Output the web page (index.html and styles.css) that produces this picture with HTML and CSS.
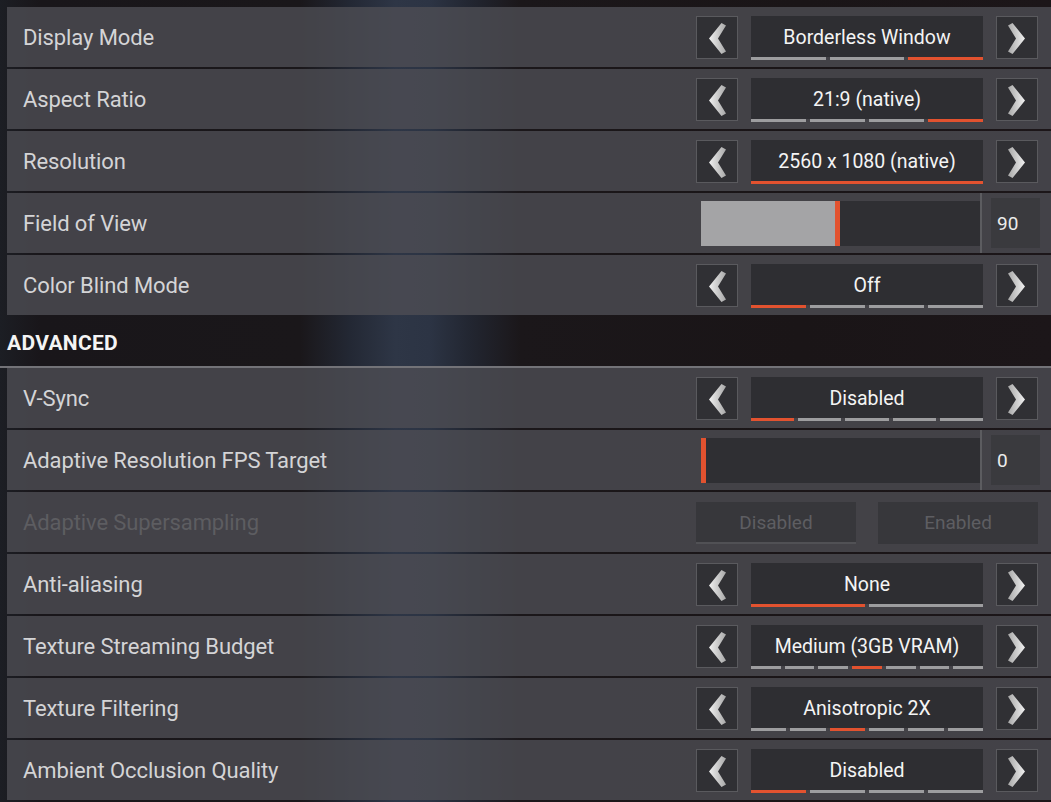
FILE: index.html
```html
<!DOCTYPE html>
<html lang="en">

<head>
  <meta charset="UTF-8">
  <meta name="viewport" content="width=device-width, initial-scale=1.0">
  <title>Video Settings</title>
  <link rel="stylesheet" href="styles.css">
</head>

<body>
  <svg width="0" height="0" class="defs">
    <defs>
      <linearGradient id="chev" x1="0" y1="0" x2="1" y2="0">
        <stop offset="0" stop-color="#f0f0f0" />
        <stop offset="1" stop-color="#a8a8a8" />
      </linearGradient>
      <symbol id="chevron" viewBox="0 0 40 41">
        <polygon points="24.5,6 29,8.5 21,21.5 29,34.5 24.5,37 12,21.5" fill="url(#chev)" />
      </symbol>
    </defs>
  </svg>

  <div class="settings">
    <div class="row">
      <span class="label">Display Mode</span>
      <div class="picker">
        <div class="arrow"><svg><use href="#chevron" /></svg></div>
        <div class="value">
          <span>Borderless Window</span>
          <div class="ticks"><i></i><i></i><i class="on"></i></div>
        </div>
        <div class="arrow next"><svg><use href="#chevron" /></svg></div>
      </div>
    </div>

    <div class="row">
      <span class="label">Aspect Ratio</span>
      <div class="picker">
        <div class="arrow"><svg><use href="#chevron" /></svg></div>
        <div class="value">
          <span>21:9 (native)</span>
          <div class="ticks"><i></i><i></i><i></i><i class="on"></i></div>
        </div>
        <div class="arrow next"><svg><use href="#chevron" /></svg></div>
      </div>
    </div>

    <div class="row">
      <span class="label">Resolution</span>
      <div class="picker">
        <div class="arrow"><svg><use href="#chevron" /></svg></div>
        <div class="value">
          <span>2560 x 1080 (native)</span>
          <div class="ticks"><i class="on"></i></div>
        </div>
        <div class="arrow next"><svg><use href="#chevron" /></svg></div>
      </div>
    </div>

    <div class="row">
      <span class="label">Field of View</span>
      <div class="slider">
        <div class="track">
          <div class="fill" style="width: 134px"></div>
          <div class="handle"></div>
        </div>
        <div class="divider"></div>
        <div class="num">90</div>
      </div>
    </div>

    <div class="row">
      <span class="label">Color Blind Mode</span>
      <div class="picker">
        <div class="arrow"><svg><use href="#chevron" /></svg></div>
        <div class="value">
          <span>Off</span>
          <div class="ticks"><i class="on"></i><i></i><i></i><i></i></div>
        </div>
        <div class="arrow next"><svg><use href="#chevron" /></svg></div>
      </div>
    </div>

    <h2 class="section">ADVANCED</h2>

    <div class="row">
      <span class="label">V-Sync</span>
      <div class="picker">
        <div class="arrow"><svg><use href="#chevron" /></svg></div>
        <div class="value">
          <span>Disabled</span>
          <div class="ticks"><i class="on"></i><i></i><i></i><i></i><i></i></div>
        </div>
        <div class="arrow next"><svg><use href="#chevron" /></svg></div>
      </div>
    </div>

    <div class="row">
      <span class="label">Adaptive Resolution FPS Target</span>
      <div class="slider">
        <div class="track">
          <div class="fill" style="width: 0px"></div>
          <div class="handle"></div>
        </div>
        <div class="divider"></div>
        <div class="num">0</div>
      </div>
    </div>

    <div class="row off">
      <span class="label">Adaptive Supersampling</span>
      <div class="toggle">
        <div class="opt sel">Disabled</div>
        <div class="opt">Enabled</div>
      </div>
    </div>

    <div class="row">
      <span class="label">Anti-aliasing</span>
      <div class="picker">
        <div class="arrow"><svg><use href="#chevron" /></svg></div>
        <div class="value">
          <span>None</span>
          <div class="ticks"><i class="on"></i><i></i></div>
        </div>
        <div class="arrow next"><svg><use href="#chevron" /></svg></div>
      </div>
    </div>

    <div class="row">
      <span class="label">Texture Streaming Budget</span>
      <div class="picker">
        <div class="arrow"><svg><use href="#chevron" /></svg></div>
        <div class="value">
          <span>Medium (3GB VRAM)</span>
          <div class="ticks"><i></i><i></i><i></i><i class="on"></i><i></i><i></i><i></i></div>
        </div>
        <div class="arrow next"><svg><use href="#chevron" /></svg></div>
      </div>
    </div>

    <div class="row">
      <span class="label">Texture Filtering</span>
      <div class="picker">
        <div class="arrow"><svg><use href="#chevron" /></svg></div>
        <div class="value">
          <span>Anisotropic 2X</span>
          <div class="ticks"><i></i><i></i><i class="on"></i><i></i><i></i><i></i></div>
        </div>
        <div class="arrow next"><svg><use href="#chevron" /></svg></div>
      </div>
    </div>

    <div class="row">
      <span class="label">Ambient Occlusion Quality</span>
      <div class="picker">
        <div class="arrow"><svg><use href="#chevron" /></svg></div>
        <div class="value">
          <span>Disabled</span>
          <div class="ticks"><i class="on"></i><i></i><i></i><i></i></div>
        </div>
        <div class="arrow next"><svg><use href="#chevron" /></svg></div>
      </div>
    </div>
  </div>
</body>

</html>
```

FILE: styles.css
```css
body {
  margin: 0;
  height: 802px;
  overflow: hidden;
  font-family: 'Roboto', 'Liberation Sans', sans-serif;
  background: linear-gradient(90deg, #1c1e24 0, #19161a 40px, #1a171a 300px, #232834 350px, #2e3646 395px, #2c3444 430px, #222631 470px, #1b171a 520px, #1a1517 800px, #1c1619 100%);
}

.defs {
  position: absolute;
}

.settings {
  padding: 7px 0 0 7px;
}

/* 一列設定 */
.row {
  height: 60px;
  margin-bottom: 2px;
  display: flex;
  align-items: center;
  padding-left: 16px;
  background: rgba(78, 78, 84, 0.8);
}

.label {
  font-size: 22px;
  color: #d4d4d6;
  letter-spacing: -0.1px;
}

.row.off .label {
  color: #5d5d61;
}

.section {
  margin: 0 0 0 -7px;
  padding-left: 7px;
  height: 49px;
  line-height: 52px;
  font-size: 21px;
  font-weight: 700;
  color: #f4f4f4;
  letter-spacing: 0.3px;
  border-bottom: 2px solid #737378;
}

/* 左右切換 */
.picker {
  margin-left: auto;
  margin-right: 13px;
  display: flex;
  align-items: center;
  gap: 13px;
}

.arrow {
  width: 40px;
  height: 41px;
  border: 1px solid #5a5a5e;
  background: #303034;
}

.arrow svg {
  width: 40px;
  height: 41px;
  display: block;
}

.arrow.next svg {
  transform: scaleX(-1);
}

.value {
  width: 232px;
  display: flex;
  flex-direction: column;
  margin-top: 2px;
}

.value span {
  height: 41px;
  line-height: 43px;
  background: #2e2e32;
  text-align: center;
  font-size: 19.5px;
  color: #f4f4f4;
}

.ticks {
  display: flex;
  gap: 4px;
  height: 3px;
}

.ticks i {
  flex: 1;
  background: #9d9d9f;
}

.ticks i.on {
  background: #e2522f;
}

/* 滑桿 */
.slider {
  margin-left: auto;
  margin-right: 11px;
  height: 60px;
  display: flex;
  align-items: center;
}

.track {
  width: 279px;
  height: 45px;
  background: #2f2f33;
  display: flex;
}

.fill {
  background: #a4a4a6;
}

.handle {
  width: 5px;
  background: #e2522f;
}

.divider {
  width: 2px;
  height: 60px;
  background: #5c5c60;
  margin-right: 9px;
}

.num {
  width: 43px;
  height: 50px;
  padding-left: 6px;
  line-height: 52px;
  background: #3a3a3e;
  font-size: 19px;
  color: #ececec;
}

/* 不能用的 */
.toggle {
  margin-left: auto;
  margin-right: 13px;
  display: flex;
  gap: 22px;
  margin-top: 2px;
}

.opt {
  width: 160px;
  height: 40px;
  line-height: 41px;
  text-align: center;
  background: #37373b;
  font-size: 19px;
  color: #5e5e62;
  border-bottom: 2px solid transparent;
}

.opt.sel {
  border-bottom-color: #515155;
}
```
